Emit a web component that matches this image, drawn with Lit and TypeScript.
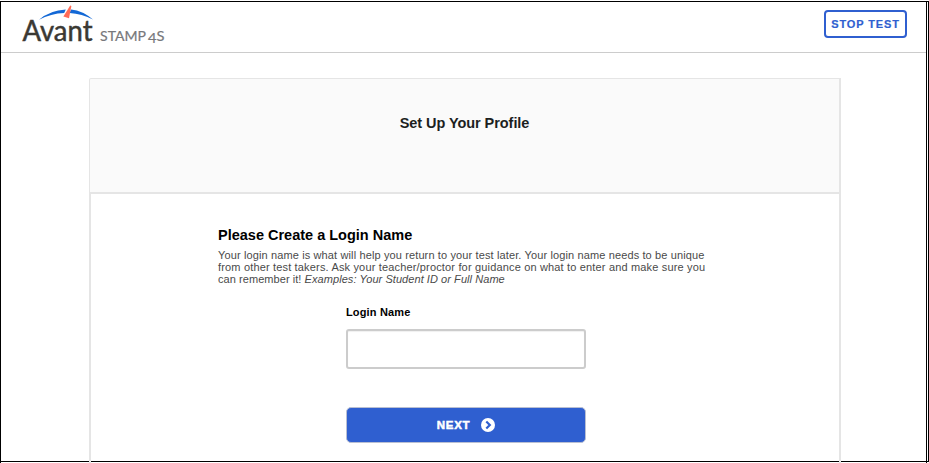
import { LitElement, html, css } from "lit";
import { customElement } from "lit/decorators.js";

@customElement("avant-logo")
class AvantLogo extends LitElement {
  static styles = css`
    :host { display: block; width: 150px; height: 44px; }
    svg { display: block; overflow: visible; }
    .brand { font: 400 28px "Lato", sans-serif; fill: #3b3933; stroke: #3b3933; stroke-width: 0.5; }
    .product { font: 400 14px "Lato", sans-serif; fill: #77787b; stroke: #77787b; stroke-width: 0.2; }
  `;
  render() {
    return html`
      <svg width="150" height="44" viewBox="0 0 150 44" role="img" aria-label="Avant STAMP 4S">
        <path d="M16 17.8Q27 8 42.8 7.4L41.2 11.1Q28 11.6 16 17.8Z" fill="#1268d6" />
        <path d="M48 7.4Q60 8.6 70 17.6Q59 12 46.6 11.1Z" fill="#1268d6" />
        <path d="M47.2 3.6L48.4 4L46 16.2L40.4 14.4Z" fill="#ff6b57" />
        <text class="brand" x="-0.5" y="38.6" textLength="70" lengthAdjust="spacingAndGlyphs">Avant</text>
        <text class="product" x="77" y="39" textLength="46" lengthAdjust="spacingAndGlyphs">STAMP</text>
        <text class="product" x="125" y="41" textLength="8.5" lengthAdjust="spacingAndGlyphs">4</text>
        <text class="product" x="133.5" y="39" textLength="8" lengthAdjust="spacingAndGlyphs">S</text>
      </svg>
    `;
  }
}

@customElement("app-root")
class AppRoot extends LitElement {
  static styles = css`
    :host {
      display: block;
      height: 463px;
      overflow: hidden;
      background: #fff;
      font-family: "Liberation Sans", Arial, sans-serif;
      color: #000;
    }
    * { box-sizing: border-box; }
    .outer { height: 461px; margin-top: 1px; border: 1px solid #000; border-left: 0; display: flow-root; }
    .page { position: relative; top: -1px; width: 927px; height: 462px; border: solid #000; border-width: 1px 1px 0 1px; }
    .bar {
      height: 51px;
      border-bottom: 1px solid #ccc;
      display: flex;
      justify-content: space-between;
      align-items: flex-start;
      padding: 0 19px 0 22px;
    }
    .stop {
      width: 83px; height: 28px; margin-top: 8px; padding: 0;
      border: 2px solid #2f5fd0; border-radius: 4px; background: #fff;
      color: #2f5fd0; font: bold 11px "Liberation Sans", Arial, sans-serif;
      letter-spacing: 0.88px; white-space: nowrap; -webkit-text-stroke: 0.2px #2f5fd0;
    }
    .card { width: 752px; margin: 25px 0 0 88px; height: 385px; display: flex; flex-direction: column; }
    .head {
      height: 116px; background: #fafafa; border: solid #e5e5e5; border-width: 1px 2px 2px 1px;
      display: flex; justify-content: center; padding-top: 35px; border-radius: 2px 0 0 0;
    }
    h1 { margin: 0; font-size: 14.5px; line-height: 18px; color: #1c1f1e; letter-spacing: -0.06px; }
    .body { flex: 1; border: solid #e5e5e5; border-width: 0 2px; padding: 32px 0 0 127px; }
    h2 { margin: 0; font-size: 14.5px; line-height: 18px; letter-spacing: 0; }
    .help { margin: 5px 0 0; width: 520px; font-size: 11px; line-height: 12px; color: #4a4a4a; white-space: nowrap; }
    .help span { display: block; }
    .l1 { letter-spacing: 0.125px; }
    .l2 { letter-spacing: 0.165px; }
    .l3 { letter-spacing: 0.06px; }
    .form { width: 240px; margin: 20px 0 0 128px; display: flex; flex-direction: column; }
    label { font-weight: bold; font-size: 11px; line-height: 14px; letter-spacing: 0.15px; }
    input {
      width: 240px; height: 40px; margin: 10px 0 0; border: 2px solid #ccc; border-radius: 3px;
      box-shadow: inset 0 1px 1px #f0f0f0; outline: 0;
    }
    .next {
      height: 36px; margin-top: 38px; padding: 0; border: 1px solid #b9bfd2; border-radius: 5px;
      background: #2f5fd0; color: #fff; font: bold 11.5px "Liberation Sans", Arial, sans-serif;
      display: flex; align-items: center; justify-content: center; gap: 11px; letter-spacing: 0.75px;
    }
    .next span { -webkit-text-stroke: 0.5px #fff; }
    .next svg { display: block; }
  `;
  render() {
    return html`
      <div class="outer">
        <div class="page">
          <header class="bar">
            <avant-logo></avant-logo>
            <button class="stop">STOP TEST</button>
          </header>
          <main class="card">
            <div class="head"><h1>Set Up Your Profile</h1></div>
            <section class="body">
              <h2>Please Create a Login Name</h2>
              <p class="help">
                <span class="l1">Your login name is what will help you return to your test later. Your login name needs to be unique</span>
                <span class="l2">from other test takers. Ask your teacher/proctor for guidance on what to enter and make sure you</span>
                <span class="l3">can remember it! <em>Examples: Your Student ID or Full Name</em></span>
              </p>
              <div class="form">
                <label for="login">Login Name</label>
                <input id="login" type="text" />
                <button class="next">
                  <span>NEXT</span>
                  <svg width="14" height="14" viewBox="0 0 14 14">
                    <circle cx="7" cy="7" r="7" fill="#fff" />
                    <path d="M5.3 3.5L8.8 7L5.3 10.5" fill="none" stroke="#2f5fd0" stroke-width="2.2" />
                  </svg>
                </button>
              </div>
            </section>
          </main>
        </div>
      </div>
    `;
  }
}
